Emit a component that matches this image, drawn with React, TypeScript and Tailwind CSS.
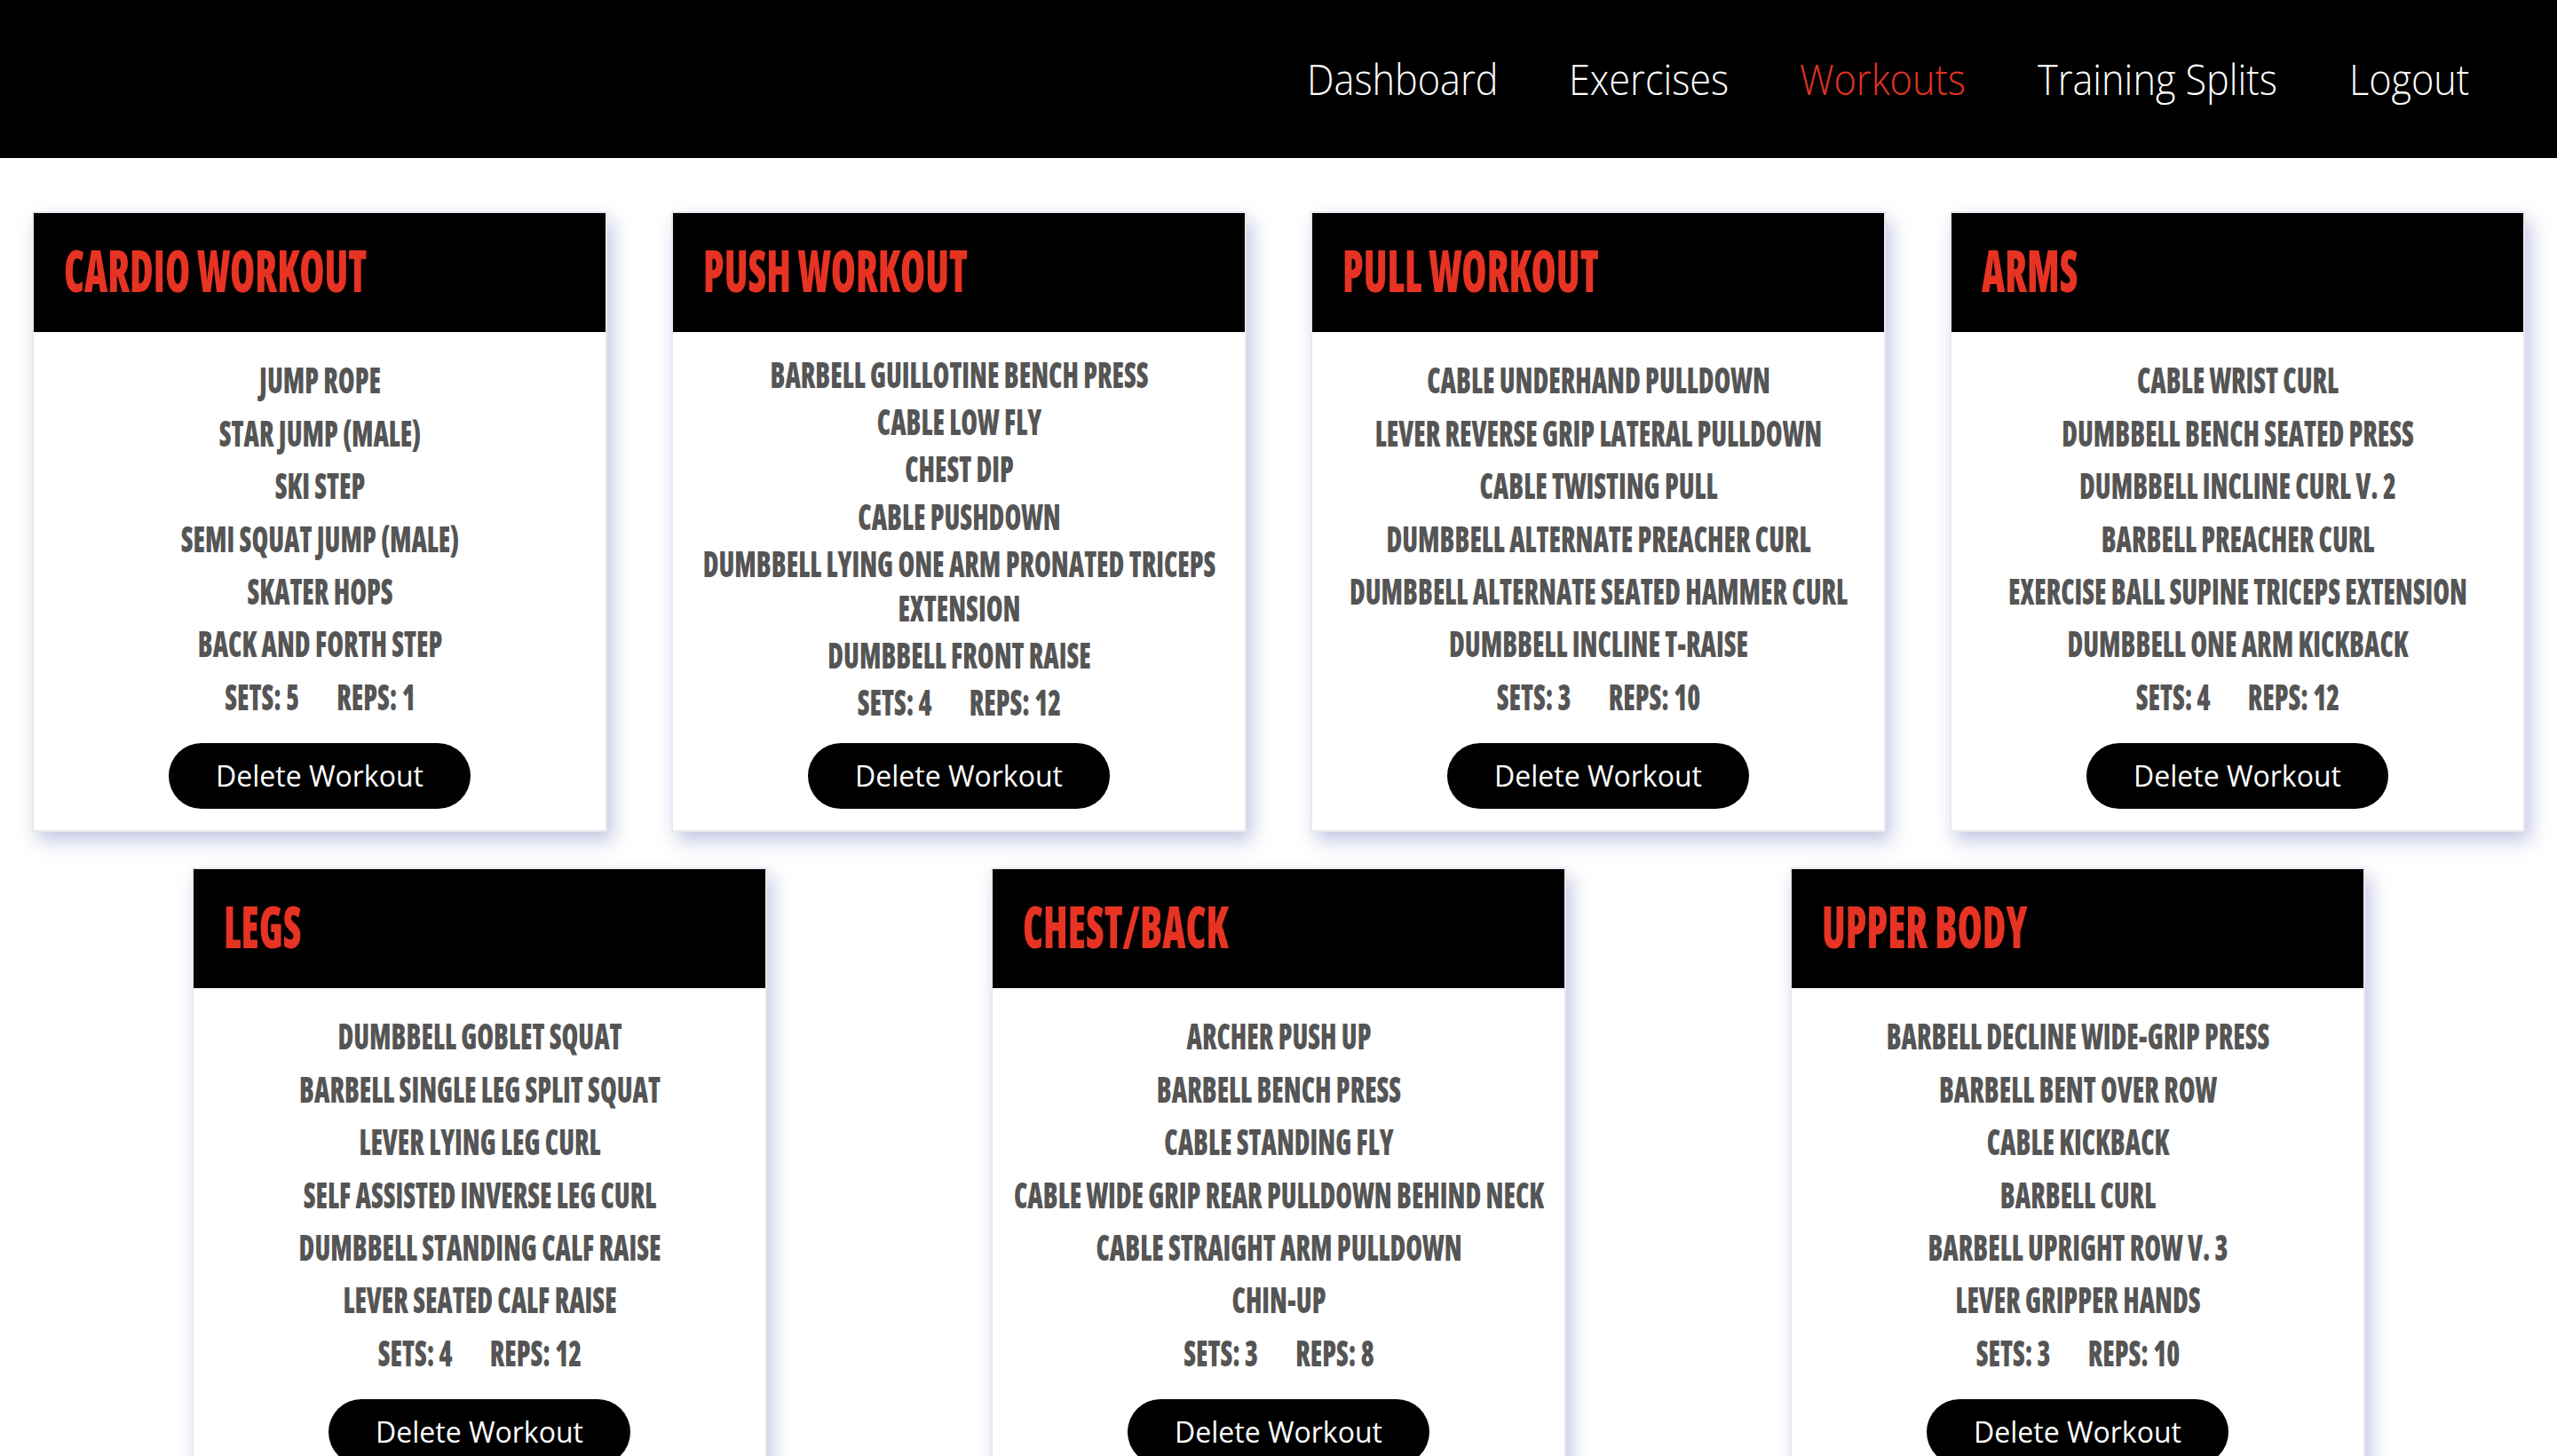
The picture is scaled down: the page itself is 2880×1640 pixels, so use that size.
import React from "react";

type Workout = {
  title: string;
  exercises: string[];
  sets: number;
  reps: number;
};

const workouts: Workout[] = [
  {
    title: "CARDIO WORKOUT",
    exercises: ["JUMP ROPE", "STAR JUMP (MALE)", "SKI STEP", "SEMI SQUAT JUMP (MALE)", "SKATER HOPS", "BACK AND FORTH STEP"],
    sets: 5,
    reps: 1,
  },
  {
    title: "PUSH WORKOUT",
    exercises: [
      "BARBELL GUILLOTINE BENCH PRESS",
      "CABLE LOW FLY",
      "CHEST DIP",
      "CABLE PUSHDOWN",
      "DUMBBELL LYING ONE ARM PRONATED TRICEPS EXTENSION",
      "DUMBBELL FRONT RAISE",
    ],
    sets: 4,
    reps: 12,
  },
  {
    title: "PULL WORKOUT",
    exercises: [
      "CABLE UNDERHAND PULLDOWN",
      "LEVER REVERSE GRIP LATERAL PULLDOWN",
      "CABLE TWISTING PULL",
      "DUMBBELL ALTERNATE PREACHER CURL",
      "DUMBBELL ALTERNATE SEATED HAMMER CURL",
      "DUMBBELL INCLINE T-RAISE",
    ],
    sets: 3,
    reps: 10,
  },
  {
    title: "ARMS",
    exercises: [
      "CABLE WRIST CURL",
      "DUMBBELL BENCH SEATED PRESS",
      "DUMBBELL INCLINE CURL V. 2",
      "BARBELL PREACHER CURL",
      "EXERCISE BALL SUPINE TRICEPS EXTENSION",
      "DUMBBELL ONE ARM KICKBACK",
    ],
    sets: 4,
    reps: 12,
  },
  {
    title: "LEGS",
    exercises: [
      "DUMBBELL GOBLET SQUAT",
      "BARBELL SINGLE LEG SPLIT SQUAT",
      "LEVER LYING LEG CURL",
      "SELF ASSISTED INVERSE LEG CURL",
      "DUMBBELL STANDING CALF RAISE",
      "LEVER SEATED CALF RAISE",
    ],
    sets: 4,
    reps: 12,
  },
  {
    title: "CHEST/BACK",
    exercises: [
      "ARCHER PUSH UP",
      "BARBELL BENCH PRESS",
      "CABLE STANDING FLY",
      "CABLE WIDE GRIP REAR PULLDOWN BEHIND NECK",
      "CABLE STRAIGHT ARM PULLDOWN",
      "CHIN-UP",
    ],
    sets: 3,
    reps: 8,
  },
  {
    title: "UPPER BODY",
    exercises: [
      "BARBELL DECLINE WIDE-GRIP PRESS",
      "BARBELL BENT OVER ROW",
      "CABLE KICKBACK",
      "BARBELL CURL",
      "BARBELL UPRIGHT ROW V. 3",
      "LEVER GRIPPER HANDS",
    ],
    sets: 3,
    reps: 10,
  },
];

// widths are the squeezed widths of each label
const navLinks = [
  { label: "Dashboard", width: "w-[213px]" },
  { label: "Exercises", width: "w-[178px]" },
  { label: "Workouts", width: "w-[186px]" },
  { label: "Training Splits", width: "w-[269px]" },
  { label: "Logout", width: "w-[133px]" },
];

const Navbar = () => (
  <nav className="flex h-[178px] shrink-0 items-center justify-end gap-[82px] bg-black pr-[101px]">
    {navLinks.map((link) => (
      <a
        key={link.label}
        href="#"
        className={`block whitespace-nowrap font-['Open_Sans',sans-serif] text-[48px] font-light ${link.width} ${
          link.label === "Workouts" ? "text-[#e63323]" : "text-white"
        }`}
      >
        <span className="inline-block origin-left scale-x-[0.9]">{link.label}</span>
      </a>
    ))}
  </nav>
);

const WorkoutCard = ({ workout }: { workout: Workout }) => (
  <div className="mx-[36px] my-5 flex h-[699px] w-[648px] flex-col border-2 border-[#e8e8ee] bg-white shadow-[6px_10px_20px_rgba(120,130,190,0.45)]">
    <div className="flex h-[134px] shrink-0 items-center bg-black pb-[9px] pl-[34px]">
      <h2 className="origin-left scale-x-[0.69] whitespace-nowrap font-['Open_Sans',sans-serif] text-[66px] font-extrabold leading-none font-stretch-condensed text-[#e63323]">
        {workout.title}
      </h2>
    </div>

    <div className="mt-[19px] flex flex-1 flex-col items-center justify-evenly font-['Open_Sans',sans-serif] text-[41px] font-extrabold leading-[50px] font-stretch-condensed text-[#555555]">
      {workout.exercises.map((exercise) => (
        <p key={exercise} className="w-[845px] shrink-0 scale-x-[0.74] text-center">
          {exercise}
        </p>
      ))}
      <p className="flex w-[845px] shrink-0 scale-x-[0.74] justify-center gap-[57px]">
        <span>SETS: {workout.sets}</span>
        <span>REPS: {workout.reps}</span>
      </p>
    </div>

    <button className="mx-auto mb-6 mt-[19px] h-[74px] w-[340px] shrink-0 rounded-full bg-black font-['Open_Sans',sans-serif] text-[32px] font-normal text-white">
      Delete Workout
    </button>
  </div>
);

export default function App() {
  return (
    <div className="flex h-screen flex-col overflow-hidden bg-white">
      <Navbar />
      <main className="flex flex-wrap justify-evenly pt-10">
        {workouts.map((workout) => (
          <WorkoutCard key={workout.title} workout={workout} />
        ))}
      </main>
    </div>
  );
}
